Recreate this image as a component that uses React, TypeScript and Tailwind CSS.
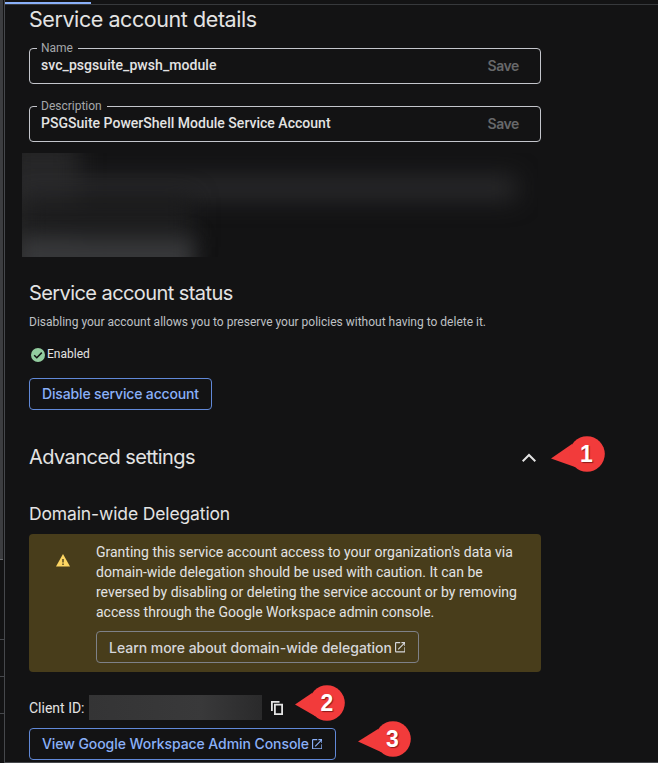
import React from "react";

function OpenIcon() {
  return (
    <svg width="10.5" height="10.5" viewBox="3 3 18 18" fill="currentColor" className="mt-px shrink-0">
      <path d="M19 19H5V5h7V3H5a2 2 0 0 0-2 2v14a2 2 0 0 0 2 2h14c1.1 0 2-.9 2-2v-7h-2v7zM14 3v2h3.59l-9.83 9.83 1.41 1.41L19 6.41V10h2V3h-7z" />
    </svg>
  );
}

function Field({ label, value, labelClass, valueClass }: { label: string; value: string; labelClass: string; valueClass: string }) {
  return (
    <div className="relative flex h-9 w-[512px] items-center justify-between rounded-[4px] border border-[#c4c6cc] pr-[21px] pl-[11px]">
      <span className={"absolute -top-[9px] left-[7px] h-4 bg-[#131314] pl-1 text-[12px] leading-4 whitespace-nowrap text-[#a5a7aa] " + labelClass}>{label}</span>
      <span className={"-mt-[3px] text-[14px] leading-5 font-medium text-[#e3e3e3] " + valueClass}>{value}</span>
      <span className="-mt-px font-[Inter] text-[14px] leading-5 font-semibold tracking-[-0.4px] text-[#67686a]">Save</span>
    </div>
  );
}

function Callout({ n, place, tip }: { n: string; place: string; tip: string }) {
  return (
    <div className={"absolute h-9 w-[54px] " + place}>
      <svg width="54" height="36" viewBox="0 0 54 36" className="absolute inset-0">
        <path d={tip} fill="#f23b3b" />
        <circle cx="36" cy="18" r="17.8" fill="#f23b3b" />
      </svg>
      <span className="absolute top-0 left-[18px] w-9 text-center font-['Liberation_Sans'] text-[23px] leading-9 font-bold text-white [text-shadow:1px_1px_1px_rgba(60,0,0,.55)]">{n}</span>
    </div>
  );
}

export default function App() {
  return (
    <div className="relative flex h-[763px] w-[658px] overflow-hidden bg-[#131314] font-[Roboto,sans-serif] text-[#e3e3e3]">
      <aside className="flex w-[5px] shrink-0 flex-col border-r border-[#46484c]">
        <div className="h-[560px] w-[3px] border-b border-[#67696c] bg-[#3c3d40]" />
        <div className="h-[80px] border-b border-[#46484c]" />
        <div className="h-[37px] border-b border-[#46484c]" />
        <div className="h-[37px] border-b border-[#46484c]" />
      </aside>
      <main className="flex grow flex-col border-b border-[#46484c]">
        <div className="flex h-[5px] shrink-0 items-start border-b border-[#37393c] pt-[2px]">
          <div className="h-[2px] w-[86px] bg-[#8ab0f8]" />
        </div>
        <div className="flex flex-col items-start pl-6">
          <h1 className="h-[43px] font-[Inter] text-[21.5px] leading-7 tracking-[-0.43px] whitespace-nowrap">Service account details</h1>
          <Field label="Name" value="svc_psgsuite_pwsh_module" labelClass="w-[41px]" valueClass="tracking-[0.06px]" />
          <div className="h-[22px]" />
          <Field label="Description" value="PSGSuite PowerShell Module Service Account" labelClass="w-[70px]" valueClass="tracking-[0.02px]" />

          <div className="relative mt-[11px] -ml-[7px] h-[104px] w-[516px] overflow-hidden">
            <div className="absolute -top-4 -left-4 h-[150px] w-[72px] bg-[#262627] blur-[12px]" />
            <div className="absolute top-[24px] -left-4 h-[22px] w-[510px] bg-[#2c2c2e] blur-[12px]" />
            <div className="absolute top-[44px] left-0 h-[50px] w-[170px] bg-[#1d1d1e] blur-[12px]" />
            <div className="absolute top-[84px] -left-1 h-[44px] w-[176px] bg-[#37383a] blur-[10px]" />
          </div>

          <h2 className="mt-[22px] h-[35px] font-[Inter] text-[20px] leading-7 tracking-[-0.58px] whitespace-nowrap">Service account status</h2>
          <p className="h-8 text-[12px] leading-4 text-[#bfc1c5]">Disabling your account allows you to preserve your policies without having to delete it.</p>
          <div className="flex h-8 items-start gap-px pl-[1px]">
            <svg width="16" height="16" viewBox="0 0 16 16" className="mt-[1px]">
              <circle cx="8" cy="8" r="7" fill="#93cda0" />
              <path d="M4.2 8.2 6.8 10.7 11.8 5.6" fill="none" stroke="#131314" strokeWidth="1.5" />
            </svg>
            <span className="text-[12px] leading-4">Enabled</span>
          </div>
          <button className="flex h-8 w-[183px] items-center rounded-[4px] border border-[#6189d8] pb-px pl-3 font-[Inter] text-[14px] font-medium tracking-[-0.15px] whitespace-nowrap text-[#8ab0f8]">Disable service account</button>

          <div className="mt-[33px] flex h-7 w-[512px] items-center justify-between pr-[5px]">
            <h2 className="font-[Inter] text-[20px] leading-7 tracking-[-0.56px] whitespace-nowrap">Advanced settings</h2>
            <svg width="14" height="10" viewBox="0 0 14 10" className="mt-px" fill="none" stroke="#e3e3e3" strokeWidth="2">
              <path d="M.7 8.3 7 2l6.3 6.3" />
            </svg>
          </div>

          <h3 className="mt-[31px] h-[32px] font-[Inter] text-[17.5px] leading-6 tracking-[-0.13px] whitespace-nowrap">Domain-wide Delegation</h3>
          <section className="flex h-[138px] w-[512px] rounded-[4px] bg-[#483d1b] pt-2">
            <svg width="14" height="13" viewBox="0 0 14 13" className="mt-3 ml-[27px] shrink-0">
              <path d="M7 0 14 12.5H0z" fill="#fdd663" />
              <path d="M6.3 5h1.4v3.5H6.3zM6.3 9.5h1.4V11H6.3z" fill="#483d1b" />
            </svg>
            <div className="ml-[26px]">
              <p className="text-[14px] leading-5 whitespace-nowrap">Granting this service account access to your organization's data via<br />domain-wide delegation should be used with caution. It can be<br />reversed by disabling or deleting the service account or by removing<br />access through the Google Workspace admin console.</p>
              <button className="mt-[9px] flex h-8 w-[323px] items-center gap-[3px] rounded-[4px] border border-[#7e8188] pl-3 font-[Inter] text-[14px] font-medium tracking-[-0.03px] whitespace-nowrap text-[#d5d6da]">
                Learn more about domain-wide delegation<OpenIcon />
              </button>
            </div>
          </section>

          <div className="mt-[23px] flex h-[25px] items-center">
            <span className="w-[60px] text-[14px] leading-5 whitespace-nowrap">Client ID:</span>
            <div className="h-[25px] w-[173px] bg-[linear-gradient(90deg,#343435,#39393a_65%,#2a2a2b)]" />
            <svg width="12" height="14" viewBox="0 0 12 14" className="mt-px ml-[9px]" fill="none" stroke="#e3e3e3" strokeWidth="1.8">
              <path d="M.9 10V.9H8.5M3.9 3.6h7.2v9.5H3.9z" />
            </svg>
          </div>
          <button className="mt-2 flex h-8 w-[307px] items-center gap-[3px] rounded-[4px] border border-[#6189d8] pb-px pl-3 font-[Inter] text-[14px] font-medium tracking-[-0.07px] whitespace-nowrap text-[#8ab0f8]">
            View Google Workspace Admin Console<OpenIcon />
          </button>
        </div>
      </main>
      <Callout n="1" place="top-[436px] left-[550.5px]" tip="M0 22.5 21 8l3 23z" />
      <Callout n="2" place="top-[684.5px] left-[291px]" tip="M4 19.5 21 8l3 23z" />
      <Callout n="3" place="top-[720.5px] left-[356.5px]" tip="M1 20.5 21 8l3 23z" />
    </div>
  );
}
